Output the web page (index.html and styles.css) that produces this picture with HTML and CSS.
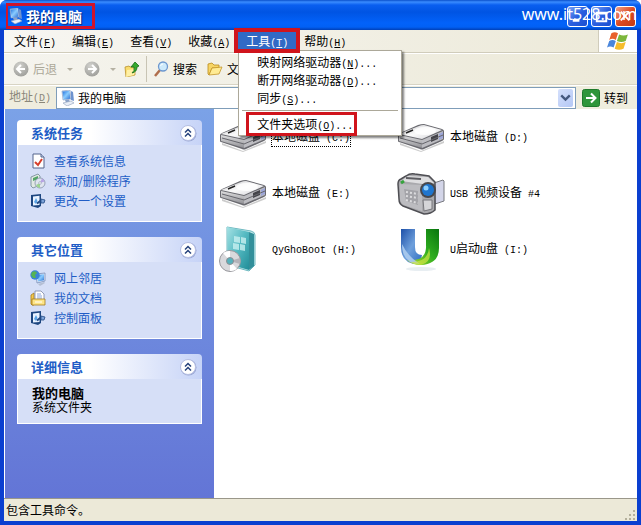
FILE: index.html
```
<!DOCTYPE html>
<html lang="zh-CN">
<head>
    <meta charset="UTF-8">
    <title>我的电脑</title>
    <link rel="stylesheet" href="styles.css">
</head>
<body>
    <!-- shared icons -->
    <svg class="sprite" aria-hidden="true">
        <defs>
            <linearGradient id="screen" x1="0" y1="0" x2="1" y2="1">
                <stop offset="0" stop-color="#1f6fdc"/><stop offset=".5" stop-color="#8accff"/><stop offset="1" stop-color="#2c6ed0"/>
            </linearGradient>
            <linearGradient id="metal" x1="0" y1="0" x2="1" y2="1">
                <stop offset="0" stop-color="#c4c4c8"/><stop offset=".5" stop-color="#fafafa"/><stop offset="1" stop-color="#d2d2d8"/>
            </linearGradient>
            <linearGradient id="front" x1="0" y1="0" x2="0" y2="1">
                <stop offset="0" stop-color="#dededf"/><stop offset="1" stop-color="#909095"/>
            </linearGradient>
            <linearGradient id="teal" x1="0" y1="0" x2="1" y2="1">
                <stop offset="0" stop-color="#a5e1e4"/><stop offset=".5" stop-color="#55bac2"/><stop offset="1" stop-color="#218d98"/>
            </linearGradient>
            <linearGradient id="u-blue" x1="0" y1="0" x2="1" y2="1">
                <stop offset="0" stop-color="#1c4fa8"/><stop offset=".5" stop-color="#6fa0dc"/><stop offset="1" stop-color="#2c6cc0"/>
            </linearGradient>
            <linearGradient id="u-green" x1="0" y1="1" x2="1" y2="0">
                <stop offset="0" stop-color="#c4e030"/><stop offset=".5" stop-color="#2fae20"/><stop offset="1" stop-color="#08750e"/>
            </linearGradient>
            <radialGradient id="grey-ball" cx=".4" cy=".3" r=".8">
                <stop offset="0" stop-color="#d2d2ce"/><stop offset="1" stop-color="#999995"/>
            </radialGradient>
        </defs>
        <symbol id="computer" viewBox="0 0 16 16">
            <path d="M2 1l8-1 1 9-8 1z" fill="#dfe8f5" stroke="#7c93bd" stroke-width=".6"/>
            <path d="M2.500 1.500l7-.8.8 8L3.500 9.500z" fill="url(#screen)"/>
            <path d="M11 1l2 1 1 9-3-1z" fill="#6e93cf"/>
            <path d="M5 10l4-.5 1 2.500-4 .8z" fill="#8aa2c8"/>
            <path d="M3 13l8-2 3 2-7 3z" fill="#e9eef6" stroke="#8d9ebb" stroke-width=".6"/>
        </symbol>
        <symbol id="drive" viewBox="0 0 48 30">
            <path d="M3 21l21 8 23-10v2L24 30 3 23z" fill="#000" opacity=".2"/>
            <path d="M1 13q0-1 2-2L21 3q3-1 6-1l18 5q2 1 2 2v8q0 1-2 2L27 27q-2 1-4 0L2 20q-1 0-1-1z" fill="#6a6a70"/>
            <path d="M2 12l20-8q2-1 5-1l18 5-20 9z" fill="url(#metal)"/>
            <path d="M2 13l23 5v8L2 19z" fill="url(#front)"/>
            <path d="M25 18l21-9v8l-21 9z" fill="#bcbcc1"/>
            <path d="M34 15l7-3v5l-7 3z" fill="#44444a"/>
            <path d="M42 12l4-2v6l-4 2z" fill="#9da6d8"/>
            <path d="M3 16l22 6 21-9" stroke="#66666c" stroke-width="1" fill="none"/>
            <path d="M9 11l7-3" stroke="#222" stroke-width="1.400"/>
            <ellipse cx="28" cy="9" rx="11" ry="4" fill="#fff" opacity=".8"/>
        </symbol>
        <symbol id="settings" viewBox="0 0 16 16">
            <path d="M1 2l10-1v12l-3 2-7-2z" fill="#1d4680"/>
            <path d="M3 3.500l6.500-.8V12L3 12.500z" fill="#e8f2ff"/>
            <path d="M4 9l2-4 1.500 3L6 11z" fill="#5aa4e6"/>
            <path d="M7 10.500L11.500 7" stroke="#224a84" stroke-width="2"/>
            <path d="M11 6l4 1-1 3-3 0z" fill="#7ea4da" stroke="#224a84" stroke-width=".8"/>
        </symbol>
        <symbol id="folder" viewBox="0 0 16 16">
            <path d="M1 3l4-1 2 2h5v3H5l-3 7-1-1z" fill="#f7d565" stroke="#b98b1d" stroke-width=".8"/>
            <path d="M5 7l10-1-3 7-10 1z" fill="#ffeb93" stroke="#c4952a" stroke-width=".8"/>
        </symbol>
        <symbol id="collapse" viewBox="0 0 18 18">
            <circle cx="9.500" cy="9.500" r="8" fill="#7885bd" opacity=".6"/>
            <circle cx="9" cy="9" r="7.500" fill="#fff" stroke="#b6bfe2"/>
            <path d="M6 8.500l3-3 3 3M6 12.500l3-3 3 3" fill="none" stroke="#26427c" stroke-width="1.500"/>
        </symbol>
    </svg>

    <div class="window">
        <header class="titlebar">
            <h1 class="title marked"><svg class="icon16"><use href="#computer"/></svg>我的电脑</h1>
            <div class="window-buttons">
                <button class="win-btn" aria-label="最小化"><svg viewBox="0 0 20 20"><path d="M5 14h7" stroke="#fff" stroke-width="3"/></svg></button>
                <button class="win-btn" aria-label="最大化"><svg viewBox="0 0 20 20"><path d="M5 6h10v9H5zM5 7h10" fill="none" stroke="#fff" stroke-width="2"/></svg></button>
                <button class="win-btn close" aria-label="关闭"><svg viewBox="0 0 20 20"><path d="M5 5l9 9M14 5l-9 9" stroke="#fff" stroke-width="2"/></svg></button>
            </div>
            <span class="watermark">www.it528.com</span>
        </header>

        <nav class="menubar">
            <button class="menu-btn">文件<span class="en">(<u>F</u>)</span></button>
            <button class="menu-btn">编辑<span class="en">(<u>E</u>)</span></button>
            <button class="menu-btn">查看<span class="en">(<u>V</u>)</span></button>
            <button class="menu-btn">收藏<span class="en">(<u>A</u>)</span></button>
            <div class="menu-wrap">
                <button class="menu-btn active">工具<span class="en">(<u>T</u>)</span></button>
                <div class="dropdown">
                    <button class="drop-item">映射网络驱动器<span class="en">(<u>N</u>)...</span></button>
                    <button class="drop-item">断开网络驱动器<span class="en">(<u>D</u>)...</span></button>
                    <button class="drop-item">同步<span class="en">(<u>S</u>)...</span></button>
                    <hr>
                    <button class="drop-item boxed">文件夹选项<span class="en">(<u>O</u>)...</span></button>
                </div>
            </div>
            <button class="menu-btn">帮助<span class="en">(<u>H</u>)</span></button>
            <div class="brand">
                <svg viewBox="0 0 20 18">
                    <path d="M4 2q3-2 6 0L8 8Q5 6 2 8z" fill="#e8602c"/>
                    <path d="M11 3q4 2 8 0l-2 6q-4 2-8 0z" fill="#7db73c"/>
                    <path d="M2 9q3-2 6 0l-2 6q-3-2-6 0z" fill="#4a86dc"/>
                    <path d="M9 10q4 2 8 0l-2 6q-4 2-8 0z" fill="#f6bd2c"/>
                </svg>
            </div>
        </nav>

        <div class="toolbar">
            <button class="tool disabled">
                <svg class="icon16" viewBox="0 0 16 16"><circle cx="8" cy="8" r="7.500" fill="url(#grey-ball)"/><path d="M12 8H5M8 4L4 8l4 4" fill="none" stroke="#fff" stroke-width="2"/></svg>
                后退
            </button>
            <span class="caret"></span>
            <button class="tool disabled" aria-label="前进">
                <svg class="icon16" viewBox="0 0 16 16"><circle cx="8" cy="8" r="7.500" fill="url(#grey-ball)"/><path d="M4 8h7M8 4l4 4-4 4" fill="none" stroke="#fff" stroke-width="2"/></svg>
            </button>
            <span class="caret"></span>
            <button class="tool up" aria-label="向上">
                <svg class="icon16" viewBox="0 0 16 16">
                    <path d="M1 6l4-1 1 1h5v8l-9 2z" fill="#f9dc6d" stroke="#b9902b" stroke-width=".8"/>
                    <path d="M3 9l9-1-2 6-8 2z" fill="#fff0a5"/>
                    <path d="M8 12q3-2 2-6H7l4-5 4 4-2 1q0 5-5 6z" fill="#35a92d" stroke="#166b17" stroke-width=".8"/>
                </svg>
            </button>
            <span class="divider"></span>
            <button class="tool">
                <svg class="icon16" viewBox="0 0 16 16">
                    <path d="M7 9l-5 6" stroke="#b06e4c" stroke-width="2.500"/>
                    <circle cx="10" cy="5.500" r="4.500" fill="#cdeafb" stroke="#6e98cf" stroke-width="1.300"/>
                    <path d="M7.500 5q.5-2 2.500-2" stroke="#fff" fill="none"/>
                </svg>
                搜索
            </button>
            <button class="tool folders"><svg class="icon16"><use href="#folder"/></svg>文件夹</button>
        </div>

        <div class="addressbar">
            <label for="address">地址<span class="en">(<u>D</u>)</span></label>
            <div class="address-field">
                <svg class="icon16"><use href="#computer"/></svg>
                <input type="text" id="address" value="我的电脑">
                <button class="address-drop" aria-label="展开"><svg viewBox="0 0 14 17"><path d="M3 6l4 4 4-4" fill="none" stroke="#45597f" stroke-width="2.200"/></svg></button>
            </div>
            <button class="go">
                <svg viewBox="0 0 18 18"><rect x=".5" y=".5" width="17" height="17" rx="2" fill="#2f963b" stroke="#1f7a2c"/><path d="M4 9h9M9 4.500L13.500 9 9 13.500" fill="none" stroke="#fff" stroke-width="2"/></svg>
                转到
            </button>
        </div>

        <div class="content">
            <aside class="sidebar">
                <section class="panel">
                    <h2>系统任务<button class="collapse" aria-label="收起"><svg><use href="#collapse"/></svg></button></h2>
                    <ul>
                        <li><a href="#"><svg class="icon16" viewBox="0 0 16 16">
                            <path d="M3 1h8l3 3v11H3z" fill="#fff" stroke="#54658c"/>
                            <path d="M11 1v3h3" fill="#c7d3ee" stroke="#54658c"/>
                            <path d="M5 9l3 3 4-6" fill="none" stroke="#d63f2c" stroke-width="2"/>
                        </svg>查看系统信息</a></li>
                        <li><a href="#"><svg class="icon16" viewBox="0 0 16 16">
                            <path d="M1 4l7-3 2 2v9l-7 3-2-2z" fill="#e1e9e4" stroke="#6f8791" stroke-width=".8"/>
                            <path d="M3 5l5-2v3L3 8z" fill="#53a568"/>
                            <circle cx="10" cy="10" r="5" fill="#dfe5ef" stroke="#8792a7" stroke-width=".8"/>
                            <path d="M10 10l2-4.500a5 5 0 012.500 3z" fill="#b7a3e4"/>
                            <path d="M10 10l-4 2a5 5 0 004 3z" fill="#9cd48f"/>
                            <circle cx="10" cy="10" r="1.300" fill="#fff" stroke="#8792a7" stroke-width=".6"/>
                        </svg>添加/删除程序</a></li>
                        <li><a href="#"><svg class="icon16"><use href="#settings"/></svg>更改一个设置</a></li>
                    </ul>
                </section>
                <section class="panel">
                    <h2>其它位置<button class="collapse" aria-label="收起"><svg><use href="#collapse"/></svg></button></h2>
                    <ul>
                        <li><a href="#"><svg class="icon16" viewBox="0 0 16 16">
                            <path d="M6 4l9-1v8l-8 2z" fill="#dfe9f8" stroke="#6c83b0" stroke-width=".7"/>
                            <path d="M7 5l7-.8v6L8 11.500z" fill="url(#screen)"/>
                            <path d="M8 14l6-2 1 1-5 3z" fill="#b4bfd4"/>
                            <circle cx="5" cy="5" r="4.700" fill="#3a82d8"/>
                            <path d="M2 2q4-2 5 1L5 5l1 3-3 0L1 5z" fill="#56b355"/>
                        </svg>网上邻居</a></li>
                        <li><a href="#"><svg class="icon16" viewBox="0 0 16 16">
                            <path d="M1 5l3-2v12H2l-1-1z" fill="#f3c94e" stroke="#a57b1c" stroke-width=".8"/>
                            <path d="M5 1h6l3 3v8H5z" fill="#fff" stroke="#7b85a5" stroke-width=".8"/>
                            <path d="M7 4h4M7 6h5M7 8h5" stroke="#8ba5dc"/>
                            <path d="M2 9h13v6H2z" fill="#fde588" stroke="#a57b1c" stroke-width=".8"/>
                            <path d="M5 12h7" stroke="#fff"/>
                        </svg>我的文档</a></li>
                        <li><a href="#"><svg class="icon16"><use href="#settings"/></svg>控制面板</a></li>
                    </ul>
                </section>
                <section class="panel">
                    <h2>详细信息<button class="collapse" aria-label="收起"><svg><use href="#collapse"/></svg></button></h2>
                    <div class="details">
                        <strong>我的电脑</strong>
                        <span>系统文件夹</span>
                    </div>
                </section>
            </aside>

            <main class="files">
                <div class="file selected">
                    <svg viewBox="0 0 48 48"><use href="#drive" y="9" width="48" height="30"/></svg>
                    <span class="name">本地磁盘<span class="en"> (C:)</span></span>
                </div>
                <div class="file">
                    <svg viewBox="0 0 48 48"><use href="#drive" y="9" width="48" height="30"/></svg>
                    <span class="name">本地磁盘<span class="en"> (D:)</span></span>
                </div>
                <div class="file">
                    <svg viewBox="0 0 48 48"><use href="#drive" y="9" width="48" height="30"/></svg>
                    <span class="name">本地磁盘<span class="en"> (E:)</span></span>
                </div>
                <div class="file">
                    <svg viewBox="0 0 48 48">
                        <path d="M37 14l9-3 1 1v20l-9 3z" fill="#d3d5e8" stroke="#77787f"/>
                        <path d="M1 15q0-4 3-5l5-3q4-3 9-2l14 2 6 6v28q-4 4-11 4L6 37q-4-2-4-7z" fill="#a9a9ad" stroke="#4f4f54" stroke-width="1.500"/>
                        <path d="M3 15l22 1v26L7 36q-3-1-4-6z" fill="#bcbcc0"/>
                        <path d="M4 12l7-5 20 1 6 6-11 1z" fill="#dedee0"/>
                        <path d="M9 9l15 1" stroke="#5d5d62" stroke-width="2"/>
                        <path d="M7 20l14 2v14L9 32z" fill="#a3a3a8"/>
                        <path d="M9 23l12 2M9 27l12 2M9 31l12 3" stroke="#dcdcde" stroke-width="2" stroke-dasharray="2 2"/>
                        <path d="M26 31h9v9l-8 2z" fill="#d5d5d8" stroke="#77777c"/>
                        <circle cx="31" cy="21" r="8" fill="#48484d"/>
                        <circle cx="31" cy="21" r="6" fill="#1f75ce"/>
                        <circle cx="29" cy="19" r="2.500" fill="#8fd0ff"/>
                        <path d="M4 14l3-2" stroke="#36a43c" stroke-width="3"/>
                    </svg>
                    <span class="name"><span class="en">USB </span>视频设备<span class="en"> #4</span></span>
                </div>
                <div class="file">
                    <svg viewBox="0 0 48 48">
                        <path d="M8 2l24 4q4 1 4 4v30l-6 6-22-6z" fill="#bfe6e8" stroke="#6fb9c0"/>
                        <path d="M8 2l22 5v38L9 39z" fill="url(#teal)"/>
                        <path d="M30 7l5 2v32l-5 4z" fill="#328f9a"/>
                        <path d="M15 11l6 1v6l-6-1zM22 12l5 1v6l-5-1zM14 18l6 1v6l-6-1zM21 19l5 1v6l-5-1z" fill="#c8f0f0" opacity=".8"/>
                        <circle cx="11" cy="36" r="10.500" fill="#d9d9dc" stroke="#98989d"/>
                        <path d="M11 36L4 28a10 10 0 017-2zM11 36l7 8a10 10 0 01-7 2z" fill="#fff"/>
                        <path d="M11 36l10-3a10 10 0 010 6z" fill="#b3b3b9"/>
                        <circle cx="11" cy="36" r="3.500" fill="#56b2bd" stroke="#8e8e92"/>
                    </svg>
                    <span class="name"><span class="en">QyGhoBoot (H:)</span></span>
                </div>
                <div class="file">
                    <svg viewBox="0 0 48 48">
                        <ellipse cx="24" cy="44" rx="15" ry="2" fill="#e8eef2"/>
                        <path d="M4 4h14v18q0 8 7 8l-2 9Q4 40 4 22z" fill="url(#u-blue)"/>
                        <path d="M29 4h13v19q0 16-18 17-9 0-14-5 20 2 19-15z" fill="url(#u-green)"/>
                        <path d="M5 19q6 13 18 20Q5 39 5 19z" fill="#a5c6ec"/>
                        <path d="M14 37q17 0 18-14 4 14-8 17-6 0-10-3z" fill="#cfe545" opacity=".7"/>
                    </svg>
                    <span class="name"><span class="en">U</span>启动<span class="en">U</span>盘<span class="en"> (I:)</span></span>
                </div>
            </main>
        </div>

        <footer class="statusbar">
            <span>包含工具命令。</span>
            <svg class="grip" viewBox="0 0 12 12"><path d="M9 1h2v2H9zM5 5h2v2H5zM9 5h2v2H9zM1 9h2v2H1zM5 9h2v2H5zM9 9h2v2H9z" fill="#b4b09c"/></svg>
        </footer>
    </div>
</body>
</html>
```

FILE: styles.css
```
* {
    box-sizing: border-box;
}
body {
    margin: 0;
    font-family: "Noto Sans CJK SC", sans-serif;
    font-size: 12px;
    line-height: 18px;
    color: #000;
    background: #fff;
}
button {
    margin: 0;
    padding: 0;
    border: none;
    background: none;
    font: inherit;
    color: inherit;
    white-space: nowrap;
}
svg {
    display: block;
    flex: none;
}
.sprite {
    position: absolute;
    width: 0;
    height: 0;
}
/* latin letters are half the width of a chinese character */
.en {
    font-family: "Liberation Mono", monospace;
    font-size: 10px;
    white-space: pre;
}
.icon16 {
    width: 16px;
    height: 16px;
}
.window {
    display: flex;
    flex-direction: column;
    min-height: 100vh;
    padding: 0 4px 4px;
    background: #0a3fd0;
    border-radius: 7px 7px 0 0;
    overflow: hidden;
}

/* title bar */
.titlebar {
    position: relative;
    display: flex;
    align-items: center;
    justify-content: space-between;
    height: 30px;
    margin: 0 -4px;
    padding: 2px 5px 0 6px;
    background: linear-gradient(#0a50cc 0, #3a8cff 2px, #0a5ff0 5px, #0054e3 12px, #0262fa 23px, #0160f5 27px, #0040b8 30px);
}
.title {
    display: flex;
    align-items: center;
    gap: 2px;
    margin: 0;
    font-size: 14px;
    line-height: 20px;
    color: #fff;
    text-shadow: 1px 1px 1px #0a2a80;
}
.marked {
    padding: 0 10px 0 0;
    border: 3px solid #d0142c;
    border-left-width: 2px;
}
.window-buttons {
    display: flex;
    gap: 3px;
}
.win-btn {
    width: 21px;
    height: 21px;
    border: 1px solid #fff;
    border-radius: 3px;
    background: linear-gradient(135deg, #7da5f5, #2a5fe0 50%, #1b4fd0);
}
.win-btn.close {
    background: linear-gradient(135deg, #f0a088, #dd4a22 50%, #c43a14);
}
.watermark {
    position: absolute;
    right: 4px;
    top: 2px;
    font-family: "Noto Sans", sans-serif;
    font-size: 16px;
    line-height: 24px;
    color: #fff;
}

/* menu bar */
.menubar {
    display: flex;
    height: 23px;
    padding: 2px 0 3px 2px;
    background: linear-gradient(90deg, #f7f6f2, #ece9d8);
    border-bottom: 1px solid #d0ccbb;
}
.menu-btn {
    height: 18px;
    padding: 0 8px;
}
.menu-btn.active {
    position: relative;
    z-index: 3;
    height: 17px;
    line-height: 17px;
    color: #fff;
    background: #316ac5;
    outline: 4px solid #d0141c;
}
.menu-wrap {
    position: relative;
}
.dropdown {
    position: absolute;
    left: 0;
    top: 18px;
    z-index: 2;
    width: 164px;
    padding: 2px 3px;
    background: #fff;
    border: 1px solid #aca899;
    box-shadow: 2px 2px 2px rgba(0, 0, 0, 0.5);
}
.drop-item {
    display: block;
    width: 100%;
    height: 18px;
    padding-left: 15px;
    text-align: left;
}
.dropdown hr {
    height: 1px;
    margin: 3px 0 4px;
    border: none;
    background: #aca899;
}
.drop-item.boxed {
    width: 105px;
    margin-left: 7px;
    padding-left: 8px;
    outline: 3px solid #d0141c;
}
.brand {
    display: flex;
    align-items: center;
    justify-content: center;
    width: 39px;
    height: 22px;
    margin: -2px 0 0 auto;
    background: #fff;
    border-left: 1px solid #d0ccbb;
}
.brand svg {
    width: 22px;
    height: 20px;
}

/* toolbar */
.toolbar {
    display: flex;
    align-items: center;
    height: 32px;
    padding-left: 9px;
    background: linear-gradient(90deg, #f5f4ee, #ece9d8);
    border-top: 1px solid #fff;
    border-bottom: 1px solid #d8d4c4;
}
.tool {
    display: flex;
    align-items: center;
    gap: 4px;
}
.tool.disabled {
    color: #aca899;
}
.caret {
    margin: 0 11px 0 10px;
    border: 3px solid transparent;
    border-top-color: #b5b1a3;
    border-bottom: none;
}
.divider {
    width: 1px;
    height: 26px;
    margin: 0 6px;
    background: #c8c4b4;
}
.tool.up {
    margin-left: -3px;
}
.folders {
    margin-left: 10px;
}

/* address bar */
.addressbar {
    display: flex;
    align-items: center;
    height: 24px;
    padding: 0 9px 0 5px;
    background: #efedde;
    border-top: 1px solid #fff;
}
.addressbar label {
    flex: none;
    margin-right: 5px;
    color: #8a877a;
}
.address-field {
    display: flex;
    flex: 1;
    align-items: center;
    gap: 2px;
    height: 22px;
    padding: 0 2px 0 3px;
    background: #fff;
    border: 1px solid #7f9db9;
}
.address-field input {
    flex: 1;
    min-width: 0;
    padding: 0;
    border: none;
    outline: none;
    background: none;
    font: inherit;
}
.address-drop {
    width: 15px;
    height: 18px;
    border-radius: 2px;
    background: linear-gradient(135deg, #d5e0fc, #b3c7f5);
}
.go {
    display: flex;
    align-items: center;
    gap: 4px;
    margin-left: 6px;
}
.go svg {
    width: 18px;
    height: 18px;
}

/* content */
.content {
    display: flex;
    flex: 1;
    background: #fff;
}
.sidebar {
    display: flex;
    flex: none;
    flex-direction: column;
    gap: 15px;
    width: 210px;
    padding: 11px 12px;
    background: linear-gradient(#7ba2e7, #6375d6);
    border-left: 1px solid #fff;
}
.panel h2 {
    display: flex;
    align-items: center;
    justify-content: space-between;
    height: 25px;
    margin: 0;
    padding: 0 5px 0 14px;
    font-size: 13px;
    color: #215dc6;
    background: linear-gradient(90deg, #fff 40%, #c6d3f7);
    border-radius: 4px 4px 0 0;
}
.collapse svg {
    width: 18px;
    height: 18px;
}
.panel ul,
.details {
    margin: 0;
    background: #d6dff7;
    border: 1px solid #fff;
    border-top: none;
}
.panel ul {
    padding: 6px 12px 10px;
    list-style: none;
}
.panel a {
    display: flex;
    align-items: center;
    gap: 8px;
    height: 20px;
    color: #215dc6;
    text-decoration: none;
}
.details {
    display: flex;
    flex-direction: column;
    padding: 7px 14px 9px;
    line-height: 14px;
}
.details strong {
    font-size: 13px;
}
.files {
    display: grid;
    flex: 1;
    grid-template-columns: 178px 1fr;
    grid-auto-rows: 56px;
    align-content: start;
    padding: 0 5px;
}
.file {
    display: flex;
    align-items: center;
    gap: 5px;
    white-space: nowrap;
}
.file svg {
    width: 48px;
    height: 48px;
}
.file.selected .name {
    outline: 1px dotted #000;
    line-height: 14px;
}

/* status bar */
.statusbar {
    display: flex;
    align-items: center;
    justify-content: space-between;
    height: 23px;
    padding: 0 1px 0 2px;
    background: #ece9d8;
    border-top: 1px solid #9a978a;
}
.grip {
    align-self: flex-end;
    width: 12px;
    height: 12px;
}
```
